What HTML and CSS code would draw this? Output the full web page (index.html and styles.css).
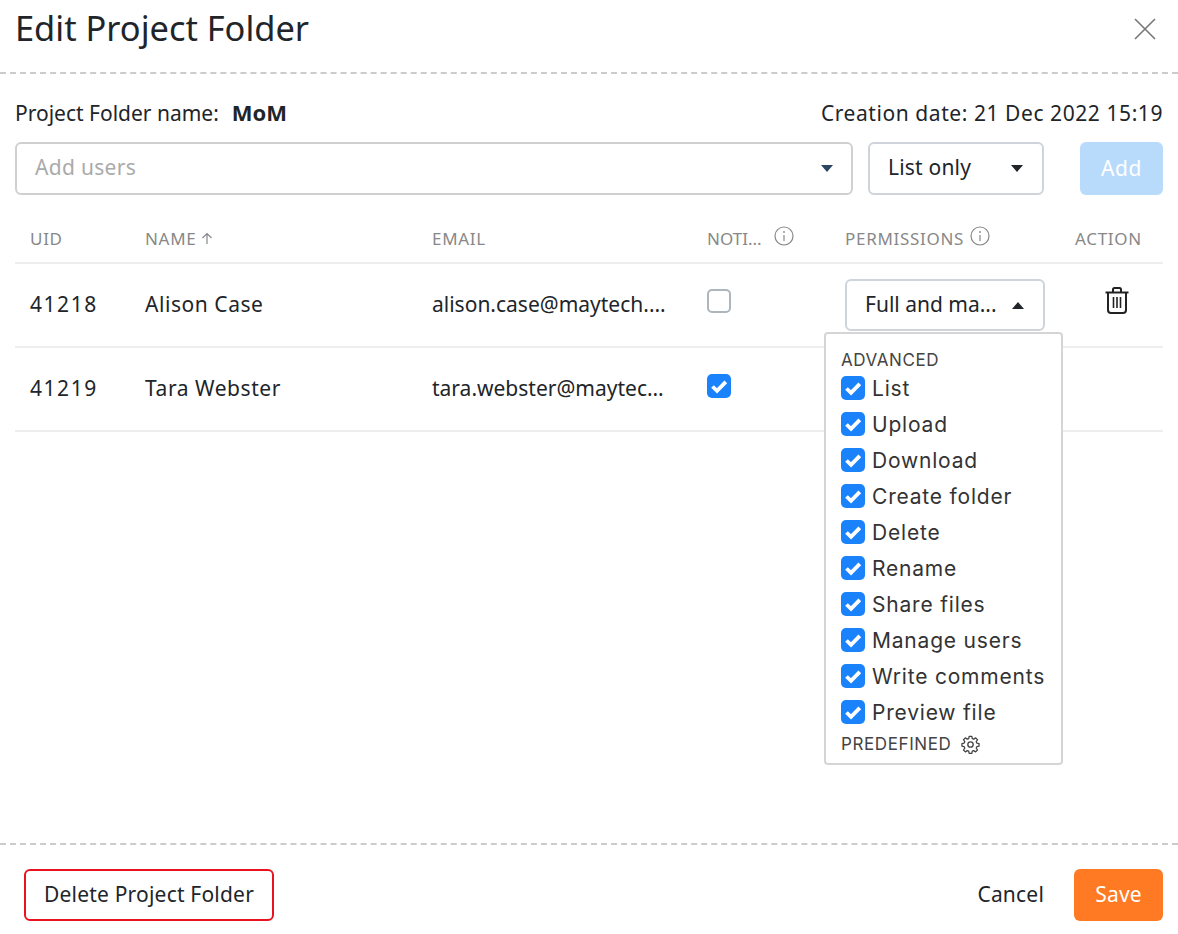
FILE: index.html
```html
<!DOCTYPE html>
<html lang="en">
<head>
<meta charset="utf-8">
<title>Edit Project Folder</title>
<link rel="stylesheet" href="styles.css">
</head>
<body>
<div class="modal">
  <header class="head">
    <h1 class="title">Edit Project Folder</h1>
    <svg class="close" width="24" height="24" viewBox="0 0 24 24"><path d="M2 2L22 22M22 2L2 22" stroke="#777" stroke-width="1.6" fill="none"/></svg>
  </header>
  <main class="body">
    <div class="meta">
      <div class="meta-name"><span>Project Folder name:</span><strong class="folder">MoM</strong></div>
      <div class="date">Creation date: 21 Dec 2022 15:19</div>
    </div>
    <div class="controls">
      <div class="field field-users"><span class="placeholder">Add users</span><i class="caret caret-navy"></i></div>
      <div class="field field-perm"><span>List only</span><i class="caret"></i></div>
      <button class="add">Add</button>
    </div>
    <div class="table">
      <div class="row row-head">
        <div>UID</div>
        <div class="name-head">NAME <svg width="12" height="13" viewBox="0 0 12 13"><path d="M6 12V1.5M1.5 6L6 1.5L10.500 6" stroke="#888" stroke-width="1.200" fill="none"/></svg></div>
        <div>EMAIL</div>
        <div class="with-info noti-head"><span>NOTI...</span><svg class="info info-noti" width="20" height="20" viewBox="0 0 20 20"><circle cx="10" cy="10" r="9" stroke="#888" stroke-width="1.200" fill="none"/><path d="M10 9v6" stroke="#888" stroke-width="1.200"/><circle cx="10" cy="6" r="0.900" fill="#888"/></svg></div>
        <div class="with-info"><span>PERMISSIONS</span><svg class="info" width="20" height="20" viewBox="0 0 20 20"><circle cx="10" cy="10" r="9" stroke="#888" stroke-width="1.200" fill="none"/><path d="M10 9v6" stroke="#888" stroke-width="1.200"/><circle cx="10" cy="6" r="0.900" fill="#888"/></svg></div>
        <div>ACTION</div>
      </div>
      <div class="row">
        <div class="uid">41218</div>
        <div class="person">Alison Case</div>
        <div class="ellipsis">alison.case@maytech.net</div>
        <div><span class="box"></span></div>
        <div class="perm-cell">
          <div class="field field-cell"><span>Full and ma...</span><i class="caret caret-up"></i></div>
          <div class="menu">
            <div class="menu-label">ADVANCED</div>
            <ul class="menu-list">
              <li class="menu-item"><span class="tick"><svg width="24" height="24" viewBox="0 0 24 24"><path d="M5.500 12.500L10 16.800L18.800 7.800" stroke="#fff" stroke-width="3.800" fill="none"/></svg></span>List</li>
              <li class="menu-item"><span class="tick"><svg width="24" height="24" viewBox="0 0 24 24"><path d="M5.500 12.500L10 16.800L18.800 7.800" stroke="#fff" stroke-width="3.800" fill="none"/></svg></span>Upload</li>
              <li class="menu-item"><span class="tick"><svg width="24" height="24" viewBox="0 0 24 24"><path d="M5.500 12.500L10 16.800L18.800 7.800" stroke="#fff" stroke-width="3.800" fill="none"/></svg></span>Download</li>
              <li class="menu-item"><span class="tick"><svg width="24" height="24" viewBox="0 0 24 24"><path d="M5.500 12.500L10 16.800L18.800 7.800" stroke="#fff" stroke-width="3.800" fill="none"/></svg></span>Create folder</li>
              <li class="menu-item"><span class="tick"><svg width="24" height="24" viewBox="0 0 24 24"><path d="M5.500 12.500L10 16.800L18.800 7.800" stroke="#fff" stroke-width="3.800" fill="none"/></svg></span>Delete</li>
              <li class="menu-item"><span class="tick"><svg width="24" height="24" viewBox="0 0 24 24"><path d="M5.500 12.500L10 16.800L18.800 7.800" stroke="#fff" stroke-width="3.800" fill="none"/></svg></span>Rename</li>
              <li class="menu-item"><span class="tick"><svg width="24" height="24" viewBox="0 0 24 24"><path d="M5.500 12.500L10 16.800L18.800 7.800" stroke="#fff" stroke-width="3.800" fill="none"/></svg></span>Share files</li>
              <li class="menu-item"><span class="tick"><svg width="24" height="24" viewBox="0 0 24 24"><path d="M5.500 12.500L10 16.800L18.800 7.800" stroke="#fff" stroke-width="3.800" fill="none"/></svg></span>Manage users</li>
              <li class="menu-item"><span class="tick"><svg width="24" height="24" viewBox="0 0 24 24"><path d="M5.500 12.500L10 16.800L18.800 7.800" stroke="#fff" stroke-width="3.800" fill="none"/></svg></span>Write comments</li>
              <li class="menu-item"><span class="tick"><svg width="24" height="24" viewBox="0 0 24 24"><path d="M5.500 12.500L10 16.800L18.800 7.800" stroke="#fff" stroke-width="3.800" fill="none"/></svg></span>Preview file</li>
            </ul>
            <div class="menu-label menu-predef">PREDEFINED
              <svg width="19" height="19" viewBox="0 0 24 24" fill="none" stroke="#444" stroke-width="1.700" stroke-linejoin="round"><circle cx="12" cy="12" r="3.400"/><path d="M10.200 2h3.600l.6 3 1.900.8 2.600-1.700 2.500 2.500-1.700 2.600.8 1.900 3 .6v3.600l-3 .6-.8 1.900 1.700 2.600-2.500 2.500-2.600-1.700-1.900.8-.6 3h-3.600l-.6-3-1.900-.8-2.600 1.700-2.500-2.500 1.700-2.600-.8-1.900-3-.6v-3.600l3-.6.8-1.900-1.700-2.600 2.500-2.500 2.600 1.700 1.900-.8z" transform="translate(12 12) scale(.94) translate(-12 -13)"/></svg>
            </div>
          </div>
        </div>
        <div class="action">
          <svg width="26" height="28" viewBox="0 0 26 28" fill="none" stroke="#222" stroke-width="2"><path d="M1.500 6.500H24.500"/><path d="M9 6V3.500Q9 2 10.500 2H15.500Q17 2 17 3.500V6"/><path d="M4 7V24Q4 27 7 27H19Q22 27 22 24V7"/><path d="M9.500 11V22M13 11V22M16.500 11V22" stroke-width="1.600"/></svg>
        </div>
      </div>
      <div class="row">
        <div class="uid">41219</div>
        <div class="person">Tara Webster</div>
        <div class="ellipsis">tara.webster@maytech.net</div>
        <div><span class="tick tick-row"><svg width="24" height="24" viewBox="0 0 24 24"><path d="M5.500 12.500L10 16.800L18.800 7.800" stroke="#fff" stroke-width="3.800" fill="none"/></svg></span></div>
        <div></div>
        <div></div>
      </div>
    </div>
  </main>
  <footer class="foot">
    <button class="btn-delete">Delete Project Folder</button>
    <div class="foot-right">
      <button class="btn-cancel">Cancel</button>
      <button class="btn-save">Save</button>
    </div>
  </footer>
</div>
</body>
</html>
```
FILE: styles.css
```css
* { box-sizing: border-box; }
html, body { margin: 0; height: 100%; }
body {
  background: #fff;
  color: #212529;
  font-family: "Noto Sans", "Open Sans", sans-serif;
  font-size: 21px;
  overflow: hidden;
}
.modal { height: 934px; display: flex; flex-direction: column; }
.head {
  height: 74px;
  padding: 0 21px 0 15px;
  display: flex;
  justify-content: space-between;
  align-items: center;
  border-bottom: 2px dashed #ccc;
}
.title { margin: 0 0 16px; font-size: 34.4px; font-weight: 400; line-height: 58px; }
.close { margin-bottom: 14px; }
.body { flex: 1; padding: 0 15px; }
.meta {
  display: flex;
  justify-content: space-between;
  align-items: center;
  height: 68px;
  padding-top: 10px;
}
.meta-name { display: flex; align-items: center; gap: 13px; }
.folder { font-weight: 700; font-size: 22px; margin-top: -2px; }
.date { letter-spacing: .57px; }
.controls { display: flex; height: 53px; }
.field {
  border: 2px solid #ced4da;
  border-radius: 6px;
  background: #fff;
  display: flex;
  align-items: center;
  justify-content: space-between;
}
.field > span { margin-bottom: 3px; }
.field-users { flex: 1; padding: 0 18px 0 18px; border-color: #d0d0d0; }
.placeholder { color: #aaa; letter-spacing: .3px; }
.field-perm { width: 176px; margin-left: 15px; padding: 0 19px 0 18px; letter-spacing: .2px; }
.caret {
  width: 0; height: 0;
  border-left: 6.5px solid transparent;
  border-right: 6.5px solid transparent;
  border-top: 7px solid #212529;
}
.caret-navy { border-top-color: #2c4560; }
.caret-up { border-top: 0; border-bottom: 7px solid #212529; }
.add {
  width: 83px;
  margin-left: 36px;
  padding: 0 0 2px;
  border: 0;
  border-radius: 6px;
  background: #b9dbfb;
  color: #fff;
  font: inherit;
  letter-spacing: .6px;
}
.table { margin-top: 21px; }
.row {
  display: grid;
  grid-template-columns: 115px 287px 275px 138px 230px 103px;
  height: 84px;
  padding: 0 0 2px 15px;
  border-bottom: 2px solid #eee;
  align-items: center;
}
.row > div { min-width: 0; }
.row-head {
  height: 48px;
  font-size: 17px;
  letter-spacing: .7px;
  color: #888;
  align-items: center;
}
.noti-head { letter-spacing: 0; }
.uid { letter-spacing: 1.55px; }
.person { letter-spacing: .55px; }
.name-head { display: flex; align-items: center; gap: 5px; }
.with-info { display: flex; align-items: center; }
.info { margin: 0 0 4px 6px; }
.info-noti { margin-left: 12px; }
.ellipsis { overflow: hidden; text-overflow: ellipsis; white-space: nowrap; padding-right: 40px; }
.box {
  display: block;
  width: 24px; height: 24px;
  border: 2px solid #adb5bd;
  border-radius: 5px;
  margin-top: -6px;
}
.tick {
  display: block;
  flex: none;
  width: 24px; height: 24px;
  border-radius: 5px;
  background: #1a82fb;
}
.tick svg { display: block; }
.tick-row { margin-top: -4px; }
.perm-cell { position: relative; }
.field-cell { width: 200px; height: 52px; margin-top: 2px; padding: 0 19px 0 18px; }
.action { padding-left: 29px; margin-top: -2px; }
.menu {
  position: absolute;
  top: 55px;
  left: -21px;
  z-index: 2;
  width: 239px;
  height: 433px;
  padding: 15px 15px 0;
  background: #fff;
  border: 2px solid #d5d5d5;
  border-radius: 4px;
  color: #333;
}
.menu-label { font-family: Inter, sans-serif; font-size: 17px; line-height: 22px; letter-spacing: .6px; color: #444; }
.menu-list { list-style: none; margin: -1px 0 0; padding: 0; }
.menu-item {
  display: flex;
  align-items: center;
  gap: 7px;
  height: 36px;
  font-family: Inter, sans-serif;
  font-size: 21px;
  letter-spacing: .8px;
}
.menu-predef { display: flex; align-items: center; gap: 10px; margin-top: 3px; }
.foot {
  height: 91px;
  padding: 24px 15px 0 24px;
  border-top: 2px dashed #ccc;
  display: flex;
  justify-content: space-between;
  align-items: flex-start;
}
.foot-right { display: flex; align-items: center; gap: 30px; }
button { font: inherit; color: inherit; background: none; }
.btn-delete {
  width: 250px; height: 52px;
  border: 2px solid #e8131f;
  border-radius: 6px;
  padding: 0 0 2px;
  letter-spacing: .2px;
}
.btn-cancel { border: 0; padding: 0 0 2px; height: 52px; letter-spacing: .2px; }
.btn-save {
  width: 89px; height: 52px;
  border: 0;
  border-radius: 6px;
  padding: 0 0 2px;
  background: #ff7a22;
  color: #fff;
  letter-spacing: .2px;
}
```
